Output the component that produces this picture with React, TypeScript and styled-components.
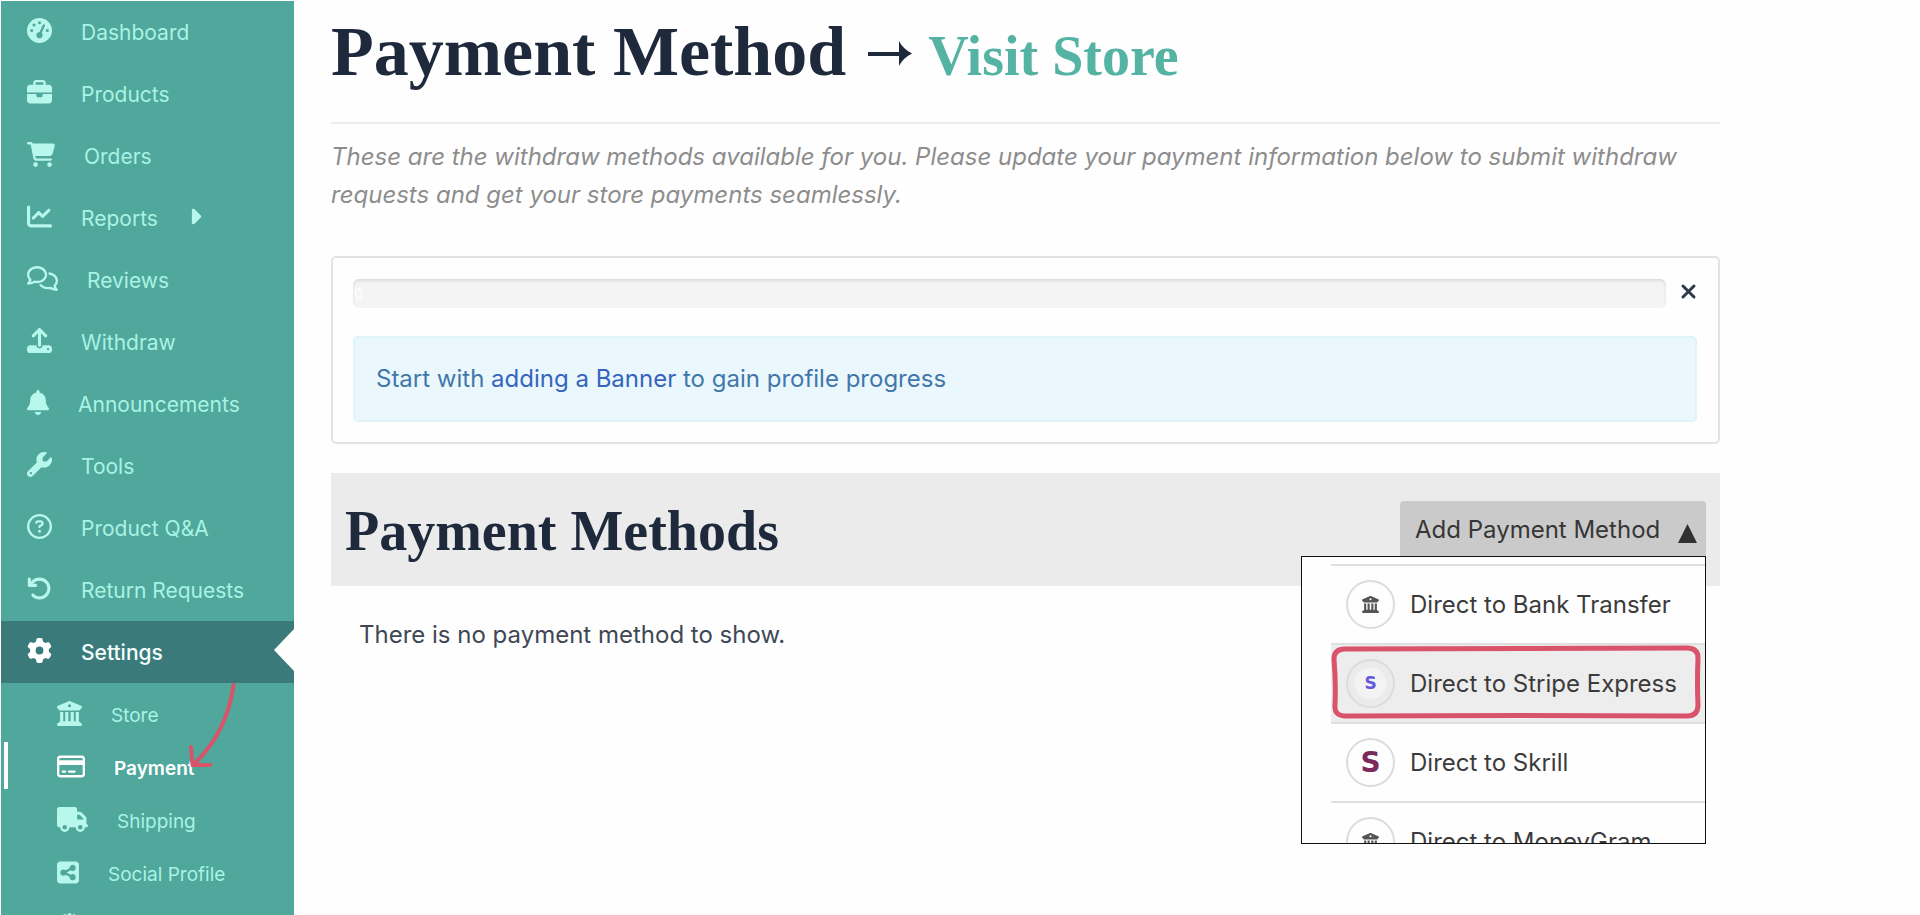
import React from 'react';
import styled, { createGlobalStyle, css } from 'styled-components';
import type { IconType } from 'react-icons';
import {
  FaArrowRotateLeft,
  FaBell,
  FaBriefcase,
  FaBuildingColumns,
  FaCaretRight,
  FaCartShopping,
  FaChartLine,
  FaGaugeHigh,
  FaGear,
  FaGlobe,
  FaRegCircleQuestion,
  FaRegComments,
  FaRegCreditCard,
  FaSquareShareNodes,
  FaTruck,
  FaUpload,
  FaWrench,
} from 'react-icons/fa6';

const color = {
  teal: '#50a79b',
  tealDark: '#3b7a7b',
  mint: '#a9f3e4',
  mintIcon: '#b8f8ec',
  ink: '#1e293b',
  annotation: '#d9536a',
};

const GlobalStyle = createGlobalStyle`
  *, *::before, *::after { box-sizing: border-box; }
  body {
    margin: 0;
    background: #fefefe;
    color: ${color.ink};
    font-family: Inter, 'Liberation Sans', sans-serif;
    font-size: 24px;
  }
  h1, h2, p, ul { margin: 0; padding: 0; }
  ul { list-style: none; }
  a { color: inherit; text-decoration: none; }
  button { font: inherit; color: inherit; border: 0; cursor: pointer; }
`;

const Shell = styled.div`
  display: flex;
  height: 100vh;
  padding: 1px 0 0 1px;
  overflow: hidden;
`;

const Sidebar = styled.nav`
  position: relative;
  flex: 0 0 293px;
  background: ${color.teal};
`;

const NavIcon = styled.span<{ $width: number; $active?: boolean }>`
  display: flex;
  flex: none;
  width: ${({ $width }) => $width}px;
  height: 25px;
  margin-bottom: 4px;
  color: ${({ $active }) => ($active ? '#fff' : color.mintIcon)};
  svg {
    width: 100%;
    height: 100%;
  }
`;

const NavLink = styled.a<{ $active?: boolean }>`
  position: relative;
  display: flex;
  align-items: center;
  gap: 29px;
  height: 62px;
  padding-left: 26px;
  font-size: 21px;
  color: ${color.mint};
  ${({ $active }) =>
    $active &&
    css`
      background: ${color.tealDark};
      color: #f4fffd;
      font-weight: 500;
      &::after {
        content: '';
        position: absolute;
        right: 0;
        top: 8px;
        border: 21px solid transparent;
        border-left-width: 0;
        border-right: 20px solid #fefefe;
      }
    `}
`;

const SubMenu = styled.ul`
  padding-top: 6px;
`;

const SubLink = styled.a<{ $active?: boolean }>`
  position: relative;
  display: flex;
  align-items: center;
  gap: 29px;
  height: 53px;
  padding-left: 56px;
  font-size: 19px;
  color: ${color.mint};
  ${({ $active }) =>
    $active &&
    css`
      color: #fff;
      font-weight: 600;
      &::before {
        content: '';
        position: absolute;
        left: 3px;
        top: 0;
        width: 4px;
        height: 47px;
        background: #fff;
      }
    `}
`;

const PointerArrow = styled.svg`
  position: absolute;
  left: 180px;
  top: 678px;
  fill: none;
  stroke: ${color.annotation};
  stroke-width: 4;
  stroke-linecap: round;
  stroke-linejoin: round;
`;

const Main = styled.main`
  flex: 1;
  min-width: 0;
  padding: 0 200px 0 37px;
`;

const PageHeader = styled.header`
  display: flex;
  align-items: baseline;
  height: 123px;
  border-bottom: 2px solid #ececee;
  font-family: 'Liberation Serif', serif;
  font-weight: 700;
`;

const PageTitle = styled.h1`
  font-size: 70px;
  line-height: 102px;
`;

const TitleArrow = styled.svg`
  flex: none;
  margin: 0 16px 0 22px;
  fill: ${color.ink};
`;

const StoreLink = styled.a`
  font-size: 56px;
  color: #54b3a3;
`;

const Intro = styled.p`
  padding-top: 14px;
  color: #8d8d8d;
  font-style: italic;
  line-height: 38px;
`;

const ProgressCard = styled.section`
  display: grid;
  grid-template-columns: 1fr 31px;
  row-gap: 28px;
  margin-top: 42px;
  padding: 21px 21px 20px 20px;
  border: 2px solid #e3e3e5;
  border-radius: 5px;
`;

const ProgressTrack = styled.div`
  height: 29px;
  padding-left: 1px;
  border-radius: 6px;
  background: #f4f4f4;
  box-shadow: inset 0 2px 3px #dcdcdc;
  color: #fff;
  font-size: 14px;
  line-height: 29px;
`;

const CloseButton = styled.button`
  display: flex;
  justify-content: flex-end;
  align-items: center;
  height: 25px;
  padding: 0;
  background: none;
  svg {
    width: 17px;
    height: 17px;
    stroke: #2c3b49;
    stroke-width: 3;
    stroke-linecap: round;
  }
`;

const Notice = styled.div`
  grid-column: 1 / -1;
  height: 86px;
  padding-left: 21px;
  border: 2px solid #dff5f9;
  border-radius: 5px;
  background: #eaf7fd;
  color: #4178a9;
  line-height: 82px;
  a { color: #3565bd; }
`;

const MethodsHeader = styled.section`
  display: flex;
  justify-content: space-between;
  align-items: flex-start;
  height: 113px;
  margin-top: 29px;
  padding: 28px 14px 0 14px;
  background: #ebebeb;
`;

const MethodsTitle = styled.h2`
  font-family: 'Liberation Serif', serif;
  font-size: 56px;
  line-height: 60px;
`;

const DropdownAnchor = styled.div`
  position: relative;
`;

const AddButton = styled.button`
  display: flex;
  justify-content: space-between;
  align-items: center;
  width: 306px;
  height: 56px;
  padding: 0 9px 0 15px;
  border-radius: 4px 4px 0 0;
  background: #cacaca;
  color: #363636;
  svg {
    width: 19px;
    height: 19px;
    margin-top: 8px;
    fill: #303030;
  }
`;

const Menu = styled.ul`
  position: absolute;
  right: 0;
  top: 55px;
  width: 405px;
  height: 288px;
  padding: 7px 0 0 29px;
  overflow: hidden;
  border: 1px solid #111;
  background: #fefefe;
`;

const MenuItem = styled.li<{ $highlighted?: boolean }>`
  position: relative;
  border-top: 2px solid #dfdfe1;
  background: ${({ $highlighted }) => ($highlighted ? '#ededed' : 'transparent')};
`;

const MethodButton = styled.button`
  display: flex;
  align-items: center;
  gap: 15px;
  width: 100%;
  height: 77px;
  padding: 0 0 0 15px;
  background: none;
  color: #3b3b3b;
  white-space: nowrap;
`;

const MethodBadge = styled.span<{ $tinted?: boolean }>`
  display: flex;
  flex: none;
  justify-content: center;
  align-items: center;
  width: 49px;
  height: 49px;
  border: 2px solid #dcdcde;
  border-radius: 50%;
  background: ${({ $tinted }) =>
    $tinted ? 'radial-gradient(circle closest-side, #f3f3f3 68%, #ebebed 74%)' : '#fefefe'};
  color: #555;
  font-size: 17px;
`;

const BrandLetter = styled.span<{ $size: number; $color: string }>`
  font-family: 'DejaVu Sans', sans-serif;
  font-weight: 700;
  font-size: ${({ $size }) => $size}px;
  line-height: 1;
  color: ${({ $color }) => $color};
`;

const HighlightFrame = styled.svg`
  position: absolute;
  left: 0;
  top: 0;
  pointer-events: none;
  fill: none;
  stroke: ${color.annotation};
  stroke-linejoin: round;
`;

const EmptyState = styled.p`
  padding: 34px 28px;
  color: #3f4855;
  line-height: 30px;
`;

interface NavEntry {
  label: string;
  Icon: IconType;
  iconWidth?: number;
  active?: boolean;
  expandable?: boolean;
}

const navEntries: NavEntry[] = [
  { label: 'Dashboard', Icon: FaGaugeHigh },
  { label: 'Products', Icon: FaBriefcase },
  { label: 'Orders', Icon: FaCartShopping, iconWidth: 28 },
  { label: 'Reports', Icon: FaChartLine, expandable: true },
  { label: 'Reviews', Icon: FaRegComments, iconWidth: 31 },
  { label: 'Withdraw', Icon: FaUpload },
  { label: 'Announcements', Icon: FaBell, iconWidth: 22 },
  { label: 'Tools', Icon: FaWrench },
  { label: 'Product Q&A', Icon: FaRegCircleQuestion },
  { label: 'Return Requests', Icon: FaArrowRotateLeft },
  { label: 'Settings', Icon: FaGear, active: true },
];

const settingsEntries: NavEntry[] = [
  { label: 'Store', Icon: FaBuildingColumns },
  { label: 'Payment', Icon: FaRegCreditCard, iconWidth: 28, active: true },
  { label: 'Shipping', Icon: FaTruck, iconWidth: 31 },
  { label: 'Social Profile', Icon: FaSquareShareNodes, iconWidth: 22 },
  { label: 'Store SEO', Icon: FaGlobe },
];

const methods = [
  { label: 'Direct to Bank Transfer', badge: <FaBuildingColumns /> },
  {
    label: 'Direct to Stripe Express',
    badge: <BrandLetter $size={17} $color="#6558dd">S</BrandLetter>,
    highlighted: true,
  },
  { label: 'Direct to Skrill', badge: <BrandLetter $size={28} $color="#7b2a5c">S</BrandLetter> },
  { label: 'Direct to MoneyGram', badge: <FaBuildingColumns /> },
];

export default function App() {
  return (
    <>
      <GlobalStyle />
      <Shell>
        <Sidebar aria-label="Store dashboard">
          <ul>
            {navEntries.map(({ label, Icon, iconWidth = 25, active, expandable }) => (
              <li key={label}>
                <NavLink href="#" $active={active}>
                  <NavIcon $width={iconWidth} $active={active}>
                    <Icon />
                  </NavIcon>
                  {label}
                  {expandable && (
                    <NavIcon $width={16}>
                      <FaCaretRight />
                    </NavIcon>
                  )}
                </NavLink>
              </li>
            ))}
          </ul>
          <SubMenu>
            {settingsEntries.map(({ label, Icon, iconWidth = 25, active }) => (
              <li key={label}>
                <SubLink href="#" $active={active} aria-current={active ? 'page' : undefined}>
                  <NavIcon $width={iconWidth} $active={active}>
                    <Icon />
                  </NavIcon>
                  {label}
                </SubLink>
              </li>
            ))}
          </SubMenu>
          <PointerArrow width="60" height="95" viewBox="0 0 60 95" aria-hidden="true">
            <path d="M52.500 6 Q46 54 12 86" />
            <path d="M10 68 L11.500 86 L29 86" />
          </PointerArrow>
        </Sidebar>
        <Main>
          <PageHeader>
            <PageTitle>Payment Method</PageTitle>
            <TitleArrow width="44" height="34" viewBox="0 0 44 34" aria-hidden="true">
              <path d="M0 11 H31 V0 Q35 8 44 12.500 Q35 17 31 25 V15 H0 Z" />
            </TitleArrow>
            <StoreLink href="#">Visit Store</StoreLink>
          </PageHeader>
          <Intro>
            These are the withdraw methods available for you. Please update your payment information
            below to submit withdraw requests and get your store payments seamlessly.
          </Intro>
          <ProgressCard>
            <ProgressTrack role="progressbar" aria-label="Profile progress" aria-valuenow={0}>
              0
            </ProgressTrack>
            <CloseButton type="button" aria-label="Close">
              <svg viewBox="0 0 17 17" aria-hidden="true">
                <path d="M3 3 L14 14 M14 3 L3 14" />
              </svg>
            </CloseButton>
            <Notice>
              Start with <a href="#">adding a Banner</a> to gain profile progress
            </Notice>
          </ProgressCard>
          <MethodsHeader>
            <MethodsTitle>Payment Methods</MethodsTitle>
            <DropdownAnchor>
              <AddButton type="button" aria-expanded="true">
                Add Payment Method
                <svg viewBox="0 0 19 19" aria-hidden="true">
                  <path d="M9.500 0 L19 19 H0 Z" />
                </svg>
              </AddButton>
              <Menu>
                {methods.map(({ label, badge, highlighted }) => (
                  <MenuItem key={label} $highlighted={highlighted}>
                    <MethodButton type="button">
                      <MethodBadge $tinted={highlighted}>{badge}</MethodBadge>
                      {label}
                    </MethodButton>
                    {highlighted && (
                      <HighlightFrame width="374" height="77" viewBox="0 0 374 77" aria-hidden="true">
                        <path
                          strokeWidth="5"
                          d="M14 4 Q190 4 356 3 Q367 3 367 13 Q366 38 367 60 Q367 71 356 71 Q190 70 15 71 Q3 71 4 60 Q5 38 3 14 Q3 4 14 4 Z"
                        />
                      </HighlightFrame>
                    )}
                  </MenuItem>
                ))}
              </Menu>
            </DropdownAnchor>
          </MethodsHeader>
          <EmptyState>There is no payment method to show.</EmptyState>
        </Main>
      </Shell>
    </>
  );
}
